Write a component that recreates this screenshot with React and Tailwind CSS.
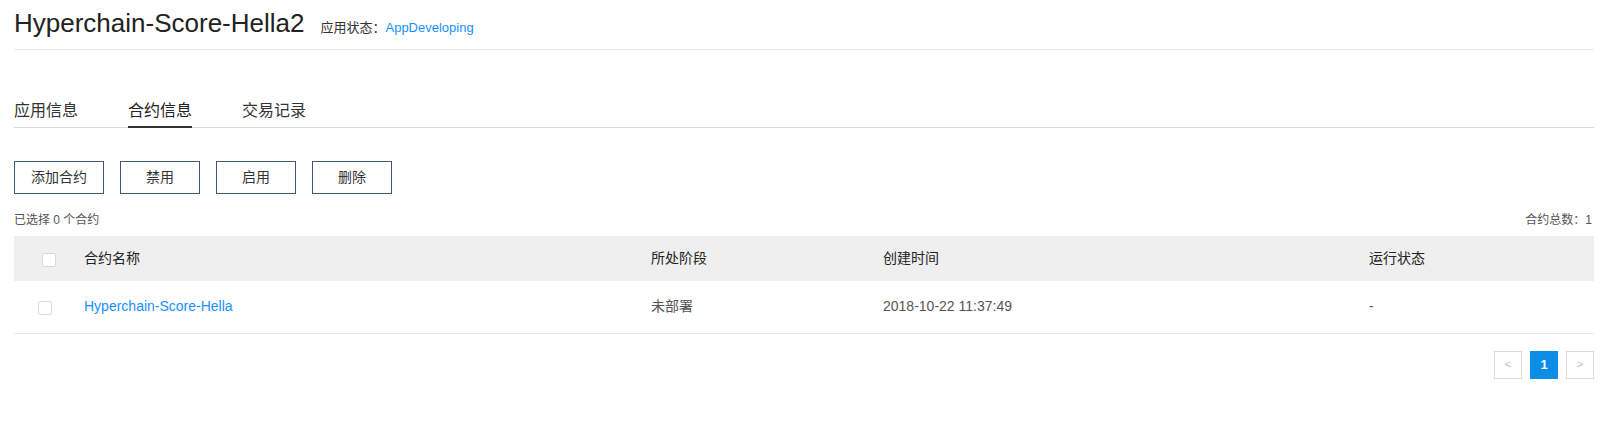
import React, { useState } from "react";

const FONT = { fontFamily: '"Liberation Sans", "Noto Sans CJK SC", sans-serif' };

const tabs = ["应用信息", "合约信息", "交易记录"];
const actions = [
  { label: "添加合约", w: "w-[90px]" },
  { label: "禁用", w: "w-[80px]" },
  { label: "启用", w: "w-[80px]" },
  { label: "删除", w: "w-[80px]" },
];

const contracts = [
  {
    name: "Hyperchain-Score-Hella",
    stage: "未部署",
    created: "2018-10-22 11:37:49",
    status: "-",
  },
];

const cols = "grid grid-cols-[54px_567px_232px_486px_1fr]";

const Checkbox = () => (
  <span className="block w-[14px] h-[14px] mt-[3px] border border-[#d9d9d9] rounded-[2px] bg-white"></span>
);

export default function App() {
  const [activeTab, setActiveTab] = useState(1);

  return (
    <div className="min-h-screen bg-white text-[#333] pl-[14px] pr-[23px]" style={FONT}>
      {/* Title */}
      <div className="flex items-baseline pt-[10px] pb-[11px] border-b border-[#e8e8e8]">
        <h1 className="text-[26px] leading-[26px] text-[#222]">Hyperchain-Score-Hella2</h1>
        <span className="ml-[16px] text-[13px] text-[#333]">应用状态：</span>
        <span className="text-[13px] text-[#1890ff]">AppDeveloping</span>
      </div>

      {/* Tabs */}
      <div className="flex gap-[50px] mt-[50px] border-b border-[#d9d9d9]">
        {tabs.map((t, i) => (
          <button
            key={t}
            onClick={() => setActiveTab(i)}
            className={`text-[16px] leading-[22px] pb-[4px] -mb-px border-b-2 ${
              i === activeTab ? "border-[#333] text-[#222]" : "border-transparent text-[#333]"
            }`}
          >
            {t}
          </button>
        ))}
      </div>

      {/* Actions */}
      <div className="flex gap-[16px] mt-[33px]">
        {actions.map((a) => (
          <button
            key={a.label}
            className={`${a.w} h-[33px] border border-[#3d5a76] text-[14px] text-[#333] bg-white`}
          >
            {a.label}
          </button>
        ))}
      </div>

      <div className="flex justify-between mt-[16px] text-[12px] leading-[20px] text-[#555]">
        <span>已选择 0 个合约</span>
        <span className="pr-[2px]">合约总数：1</span>
      </div>

      {/* Table */}
      <div className="mt-[6px]">
        <div className={`${cols} h-[45px] items-center bg-[#efefef] text-[14px] text-[#222]`}>
          <div className="pl-[28px]">
            <Checkbox />
          </div>
          <div className="pl-[16px]">合约名称</div>
          <div className="pl-[16px]">所处阶段</div>
          <div className="pl-[16px]">创建时间</div>
          <div className="pl-[16px]">运行状态</div>
        </div>
        {contracts.map((c) => (
          <div
            key={c.name}
            className={`${cols} h-[53px] items-center border-b border-[#e8e8e8] text-[14px] text-[#555]`}
          >
            <div className="pl-[24px]">
              <Checkbox />
            </div>
            <div className="pl-[16px] text-[#1890ff]">{c.name}</div>
            <div className="pl-[16px]">{c.stage}</div>
            <div className="pl-[16px]">{c.created}</div>
            <div className="pl-[16px]">{c.status}</div>
          </div>
        ))}
      </div>

      {/* Pagination */}
      <div className="flex justify-end gap-[8px] mt-[17px]">
        <span className="w-[28px] h-[28px] flex items-center justify-center border border-[#d9d9d9] text-[11px] text-[#bbb]">
          &lt;
        </span>
        <span className="w-[28px] h-[28px] flex items-center justify-center bg-[#0b8de8] text-white text-[13px] font-bold">
          1
        </span>
        <span className="w-[28px] h-[28px] flex items-center justify-center border border-[#d9d9d9] text-[11px] text-[#bbb]">
          &gt;
        </span>
      </div>
    </div>
  );
}
